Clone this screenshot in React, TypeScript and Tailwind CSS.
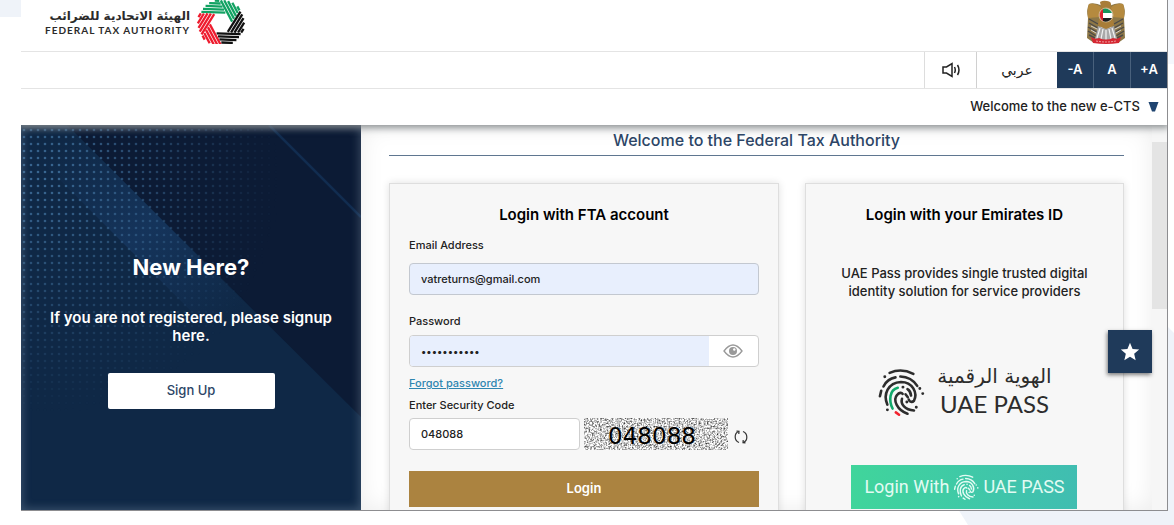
import { useState } from 'react';

const HATCH = [
  { y: -10.5, x1: -20, x2: 4 },
  { y: -13.5, x1: -18.5, x2: 2.5 },
  { y: -16.5, x1: -16, x2: 1 },
  { y: -19.5, x1: -12.5, x2: -1 },
  { y: -22.2, x1: -7, x2: -2.5 },
];
const HATCH_COLORS = ['#12a262', '#12a262', '#111111', '#111111', '#ee1c2e', '#ee1c2e'];

function FtaLogo() {
  return (
    <svg viewBox="-25 -23 50 44" className="h-11 w-[50px]" aria-hidden="true">
      {HATCH_COLORS.map((color, i) => (
        <g key={i} transform={`rotate(${i * 60 + 2})`}>
          {HATCH.map((line) => (
            <line key={line.y} x1={line.x1} x2={line.x2} y1={line.y} y2={line.y} stroke={color} strokeWidth="2.3" />
          ))}
        </g>
      ))}
    </svg>
  );
}

function Emblem() {
  return (
    <svg viewBox="0 0 40 44" className="h-11 w-10" aria-hidden="true">
      {/* Wings */}
      <path d="M17 6 Q8 2 3 4 Q0 10 2 18 L1 38 L8 43 L14 28 L17 22Z" fill="#8d7747" />
      <path d="M23 6 Q32 2 37 4 Q40 10 38 18 L39 38 L32 43 L26 28 L23 22Z" fill="#8d7747" />
      <path d="M3 4 Q10 3 16 8 L14 17 L2 18 Q1 8 3 4Z" fill="#b58a3f" />
      <path d="M37 4 Q30 3 24 8 L26 17 L38 18 Q39 8 37 4Z" fill="#b58a3f" />
      <path
        d="M3 19 l9 5 M3 23 l9 5 M2 27 l9 5 M2 31 l8 5 M3 35 l6 3 M37 19 l-9 5 M37 23 l-9 5 M38 27 l-9 5 M38 31 l-8 5 M37 35 l-6 3"
        stroke="#4c4a48"
        strokeWidth="1.4"
      />
      <path d="M5 26 l6 3 M5 30 l5 3 M35 26 l-6 3 M35 30 l-5 3" stroke="#d5d2cc" strokeWidth="1" />
      {/* Head and body */}
      <path d="M14 2 Q17 0 21 1 Q26 1 25 7 L28 25 L20 30 L12 25 L15 7 Z" fill="#a87d38" />
      <path d="M12 26 L20 29 L28 26 L31 39 L20 42 L9 39Z" fill="#a9a9a9" />
      <path d="M14 28 L11 38 M17 29 L15 39 M20 30 V40 M23 29 L25 39 M26 28 L29 38" stroke="#f3f3f3" strokeWidth="1.2" />
      {/* Shield */}
      <circle cx="20" cy="15" r="7" fill="#ffffff" stroke="#c9b48b" />
      <path d="M17 9 A7 7 0 0 1 26 13 L17 13Z" fill="#16945b" />
      <path d="M17 18 L26 18 A7 7 0 0 1 17 21Z" fill="#1d1d1d" />
      <path d="M17 9 A7 7 0 0 0 17 21Z" fill="#d9202f" />
      {/* Banner */}
      <path d="M5 37 Q9 40 13 38 Q20 41 27 38 Q31 40 35 37 L33 43 Q20 45 7 43Z" fill="#d52732" />
      <path d="M10 41 Q20 43 30 41" stroke="#f0a1a3" strokeWidth="1" strokeDasharray="2 1" fill="none" />
    </svg>
  );
}

interface FingerprintProps {
  className: string;
  accent?: boolean;
}

function Fingerprint({ className, accent = false }: FingerprintProps) {
  return (
    <svg
      viewBox="18 14 148 154"
      className={className}
      fill="none"
      stroke="currentColor"
      strokeWidth="8"
      strokeLinecap="round"
      aria-hidden="true"
    >
      <path d="M57 32 Q93 16 130 35" />
      <path d="M38 74 Q50 50 75 46" />
      <path d="M90 43 Q124 44 142 72" />
      <path d="M31 87 L27 104" />
      <path d="M50 130 C36 98 52 62 92 60 C128 60 144 94 132 118 C126 124 118 122 116 114" />
      <path d="M66 142 C54 118 56 84 82 78" stroke={accent ? '#12a96b' : 'currentColor'} />
      <path d="M76 154 L86 161" stroke={accent ? '#f1232f' : 'currentColor'} />
      <path d="M112 158 C80 146 66 116 80 100 C86 92 94 92 97 97" />
      <path d="M132 148 C104 146 90 128 95 112" />
      <path d="M112 82 Q122 88 123 102" />
      <path d="M106 98 L113 107" />
      <path d="M42 44h.1 M98 76h.1 M110 122h.1 M150 80h.1 M159 96h.1 M139 138h.1 M50 146h.1" strokeWidth="9" />
    </svg>
  );
}

function PanelArt() {
  return (
    <svg
      viewBox="0 0 340 385"
      preserveAspectRatio="xMidYMin slice"
      className="absolute inset-0 h-full w-full"
      aria-hidden="true"
    >
      <defs>
        <pattern id="dots" width="7" height="7" patternUnits="userSpaceOnUse">
          <circle cx="3" cy="5" r="1.3" fill="#40709c" />
        </pattern>
        <radialGradient id="fade" gradientUnits="userSpaceOnUse" cx="20" cy="50" r="240">
          <stop offset="0" stopColor="#fff" stopOpacity="0.9" />
          <stop offset="0.45" stopColor="#fff" stopOpacity="0.5" />
          <stop offset="1" stopColor="#fff" stopOpacity="0" />
        </radialGradient>
        <linearGradient id="band" gradientUnits="userSpaceOnUse" x1="50" y1="10" x2="200" y2="200">
          <stop offset="0" stopColor="#15345b" stopOpacity="0" />
          <stop offset="0.5" stopColor="#15345b" />
          <stop offset="1" stopColor="#15345b" stopOpacity="0" />
        </linearGradient>
        <mask id="dotMask">
          <rect width="340" height="385" fill="url(#fade)" />
        </mask>
      </defs>
      <rect width="340" height="385" fill="#0f2846" />
      <path d="M46 0 H340 V292Z" fill="#0c1b35" />
      <path d="M46 0 L240 194 L178 194 L16 32Z" fill="url(#band)" />
      <path d="M248 0 L340 92" stroke="#122d50" strokeWidth="2.5" />
      <rect width="340" height="385" fill="url(#dots)" mask="url(#dotMask)" />
    </svg>
  );
}

function Captcha() {
  return (
    <div className="relative flex h-8 w-36 items-center justify-center overflow-hidden">
      <svg className="absolute inset-0 h-full w-full" aria-hidden="true">
        <filter id="noise" x="0" y="0" width="100%" height="100%" colorInterpolationFilters="sRGB">
          <feTurbulence type="fractalNoise" baseFrequency="0.6" numOctaves="2" seed="4" />
          <feColorMatrix values="1.7 0 0 0 -0.05  1.7 0 0 0 -0.05  1.7 0 0 0 -0.05  0 0 0 0 1" />
        </filter>
        <rect width="100%" height="100%" filter="url(#noise)" />
      </svg>
      <span className="relative pt-1 pr-2 font-['DejaVu_Sans',sans-serif] text-[23px] leading-8 text-black">048088</span>
    </div>
  );
}

export default function App() {
  const [email, setEmail] = useState('vatreturns@gmail.com');
  const [password, setPassword] = useState('12345678901');
  const [code, setCode] = useState('048088');
  const [showPassword, setShowPassword] = useState(false);

  return (
    <div className="relative flex h-screen flex-col overflow-hidden bg-white pr-1.5 pb-3.5 pl-[21px] font-[Inter,sans-serif] text-[#222222]">
      {/* Page backdrop */}
      <div className="absolute top-0 left-0 h-[17px] w-[21px] bg-[#eff3f9]" />
      <div className="absolute top-0 right-0 h-16 w-1.5 bg-[#f4f7fc]" />
      <svg viewBox="0 0 216 200" className="absolute right-0 bottom-0 h-[200px] w-[216px]" aria-hidden="true">
        <path d="M0 184 H216 V200 H10Z" fill="#eff3f9" />
        <path d="M208 0 L216 8 V200 H208Z" fill="#eff3f9" />
      </svg>

      <div className="relative flex min-h-0 flex-1 flex-col overflow-hidden border-r border-b border-[#8d8d90] bg-white">
        <header className="relative z-10 shadow-[0_1px_7px_2px_rgba(130,135,138,0.9)]">
          <div className="flex h-[52px] items-start justify-between border-b border-[#e4e4e4] bg-white pr-[41px] pl-6">
            <div className="flex gap-1.5">
              <div className="pt-2">
                <p className="font-['DejaVu_Sans',sans-serif] text-xs leading-4 font-bold text-[#2b2b2b]" dir="rtl">
                  الهيئة الاتحادية للضرائب
                </p>
                <p className="font-[Lato,sans-serif] text-[10px] leading-3 font-bold tracking-widest text-[#2b2b2b]">
                  FEDERAL TAX AUTHORITY
                </p>
              </div>
              <FtaLogo />
            </div>
            <Emblem />
          </div>

          <div className="flex h-[37px] items-stretch justify-end border-b border-[#e4e4e4] bg-white">
            <button type="button" aria-label="Read aloud" className="flex w-[52px] items-center justify-center border-l border-[#dddddd]">
              <svg viewBox="0 0 20 16" className="h-4 w-5" fill="none" stroke="#222222" strokeWidth="1.5" aria-hidden="true">
                <path d="M2 5 H5.500 L11 1.500 V14.500 L5.500 11 H2Z" />
                <path d="M13.500 5 Q15 8 13.500 11 M16.500 3 Q19.500 8 16.500 13" />
              </svg>
            </button>
            <button type="button" lang="ar" className="w-[81px] border-l border-[#d0d0d0] font-['DejaVu_Sans',sans-serif] text-sm">
              عربي
            </button>
            <div className="flex divide-x divide-[#49617c] bg-[#1f3a5a] text-[13px] font-semibold text-white">
              <button type="button" className="w-[37px]">-A</button>
              <button type="button" className="w-[37px]">A</button>
              <button type="button" className="w-9">+A</button>
            </div>
          </div>

          <div className="flex h-9 items-center justify-end bg-white pr-2">
            <button type="button" className="flex items-center gap-2 text-[13px] font-medium">
              Welcome to the new e-CTS
              <svg viewBox="0 0 11 10" className="h-2.5 w-[11px]" aria-hidden="true">
                <path d="M0.500 0 H10.500 L7 9.500 H4Z" fill="#1f4470" />
              </svg>
            </button>
          </div>
        </header>

        <main className="relative flex min-h-0 flex-1 overflow-hidden">
          {/* Sign up */}
          <section className="relative w-[340px] shrink-0 overflow-hidden">
            <PanelArt />
            <div className="absolute inset-0 shadow-[inset_0_0_8px_2px_rgba(150,170,190,0.3)]" />
            <div className="relative flex flex-col items-center px-6 pt-[130px] text-center text-white">
              <h2 className="text-[22px] leading-6 font-bold">New Here?</h2>
              <p className="mt-[30px] text-[15px] leading-[18px] font-semibold">
                If you are not registered, please signup here.
              </p>
              <button type="button" className="mt-7 h-9 w-[167px] rounded-xs bg-white text-[13px] font-medium text-[#2c4566]">
                Sign Up
              </button>
            </div>
          </section>

          {/* Login */}
          <section className="min-w-0 flex-1 bg-white px-7 shadow-[inset_0_0_24px_rgba(0,0,0,0.08)]">
            <h1 className="h-[31px] border-b border-[#5f7690] text-center text-base leading-[30px] font-medium text-[#2c4566]">
              Welcome to the Federal Tax Authority
            </h1>

            <div className="mt-[27px] grid grid-cols-[minmax(0,11fr)_minmax(0,9fr)] gap-[26px]">
              <form
                className="border border-[#dedede] bg-[#f7f7f7] px-[19px] pt-[19px] pb-8 shadow-[0_0_8px_rgba(0,0,0,0.12)]"
                onSubmit={(e) => e.preventDefault()}
              >
                <h2 className="text-center text-[15px] leading-6 font-semibold text-black">Login with FTA account</h2>

                <label htmlFor="email" className="mt-2.5 block text-[11px] leading-4 font-medium">Email Address</label>
                <input
                  id="email"
                  type="email"
                  value={email}
                  onChange={(e) => setEmail(e.target.value)}
                  className="mt-2.5 block h-8 w-full rounded-sm border border-[#c3c8d0] bg-[#e8effd] px-[11px] text-[11px] font-medium"
                />

                <label htmlFor="password" className="mt-[18px] block text-[11px] leading-4 font-medium">Password</label>
                <div className="mt-1.5 flex h-8 overflow-hidden rounded-sm border border-[#cfcfcf] bg-white">
                  <input
                    id="password"
                    type={showPassword ? 'text' : 'password'}
                    value={password}
                    onChange={(e) => setPassword(e.target.value)}
                    className="min-w-0 flex-1 bg-[#e8effd] px-[11px] text-[10px] font-medium"
                  />
                  <button
                    type="button"
                    aria-label="Show password"
                    onClick={() => setShowPassword(!showPassword)}
                    className="flex w-[49px] items-center justify-center"
                  >
                    <svg viewBox="0 0 20 14" className="h-3.5 w-5" fill="none" stroke="#999999" strokeWidth="1.300" aria-hidden="true">
                      <path d="M1 7 Q10 -5 19 7 Q10 19 1 7Z" />
                      <circle cx="10" cy="7" r="4" fill="#999999" stroke="none" />
                      <circle cx="11.300" cy="5.500" r="1.200" fill="#ffffff" stroke="none" />
                    </svg>
                  </button>
                </div>

                <a href="#forgot" className="mt-2 block w-fit text-[11px] leading-4 font-medium text-[#2f86b0] underline">
                  Forgot password?
                </a>

                <label htmlFor="code" className="mt-1.5 block text-[11px] leading-4 font-medium">Enter Security Code</label>
                <div className="mt-[5px] flex items-center">
                  <input
                    id="code"
                    type="text"
                    value={code}
                    onChange={(e) => setCode(e.target.value)}
                    className="mr-1 h-8 w-[171px] min-w-0 rounded-sm border border-[#cfcfcf] bg-white px-[11px] text-[11px] font-medium"
                  />
                  <Captcha />
                  <button type="button" aria-label="New code" className="mt-1.5 ml-1.5">
                    <svg viewBox="0 0 14 14" className="size-3.5" fill="none" stroke="#333333" strokeWidth="1.200" aria-hidden="true">
                      <path d="M5 12.500 C0 10.500 0 3.500 4.500 1.500 M2.500 1.200 L5 1.300 L4.800 4" />
                      <path d="M9 1.500 C14 3.500 14 10.500 9.500 12.500 M11.500 12.800 L9 12.700 L9.200 10" />
                    </svg>
                  </button>
                </div>

                <button type="submit" className="mt-[21px] h-9 w-full bg-[#ab8340] text-[13px] font-semibold text-white">
                  Login
                </button>
              </form>

              <div className="flex flex-col items-center border border-[#dedede] bg-[#f7f7f7] px-6 pt-[19px] text-center shadow-[0_0_8px_rgba(0,0,0,0.12)]">
                <h2 className="text-[15px] leading-6 font-semibold text-black">Login with your Emirates ID</h2>
                <p className="mt-[37px] text-[13px] leading-[18px] font-medium">
                  UAE Pass provides single trusted digital identity solution for service providers
                </p>
                <div className="mt-16 flex items-center gap-3 text-[#2d2d2d]">
                  <Fingerprint className="h-[50px] w-12" accent />
                  <div className="text-center">
                    <p className="font-['DejaVu_Sans',sans-serif] text-xl leading-6" dir="rtl">الهوية الرقمية</p>
                    <p className="font-[Lato,sans-serif] text-2xl leading-8">UAE PASS</p>
                  </div>
                </div>
                <button
                  type="button"
                  className="mt-[45px] flex h-11 w-[226px] items-center justify-center gap-1 bg-linear-to-r from-[#40d59b] to-[#40bdb1] font-[Roboto,sans-serif] text-lg text-[#e3fbf3]"
                >
                  Login With
                  <Fingerprint className="h-7 w-[26px]" />
                  UAE PASS
                </button>
              </div>
            </div>
          </section>

          {/* Scroll track */}
          <div className="w-[15px] shrink-0 bg-[#f6f6f6] pt-[17px]">
            <div className="h-[167px] bg-[#e4e4e4]" />
          </div>

          <button
            type="button"
            aria-label="Favourites"
            className="absolute top-[205px] right-[15px] flex h-[43px] w-11 items-center justify-center bg-[#1f3a5a] shadow-[-1px_2px_4px_rgba(0,0,0,0.5)]"
          >
            <svg viewBox="0 0 24 24" className="size-[22px]" fill="#ffffff" aria-hidden="true">
              <path d="M12 17.270L18.180 21l-1.640-7.030L22 9.240l-7.190-.61L12 2 9.190 8.630 2 9.240l5.460 4.730L5.820 21z" />
            </svg>
          </button>
        </main>
      </div>
    </div>
  );
}
